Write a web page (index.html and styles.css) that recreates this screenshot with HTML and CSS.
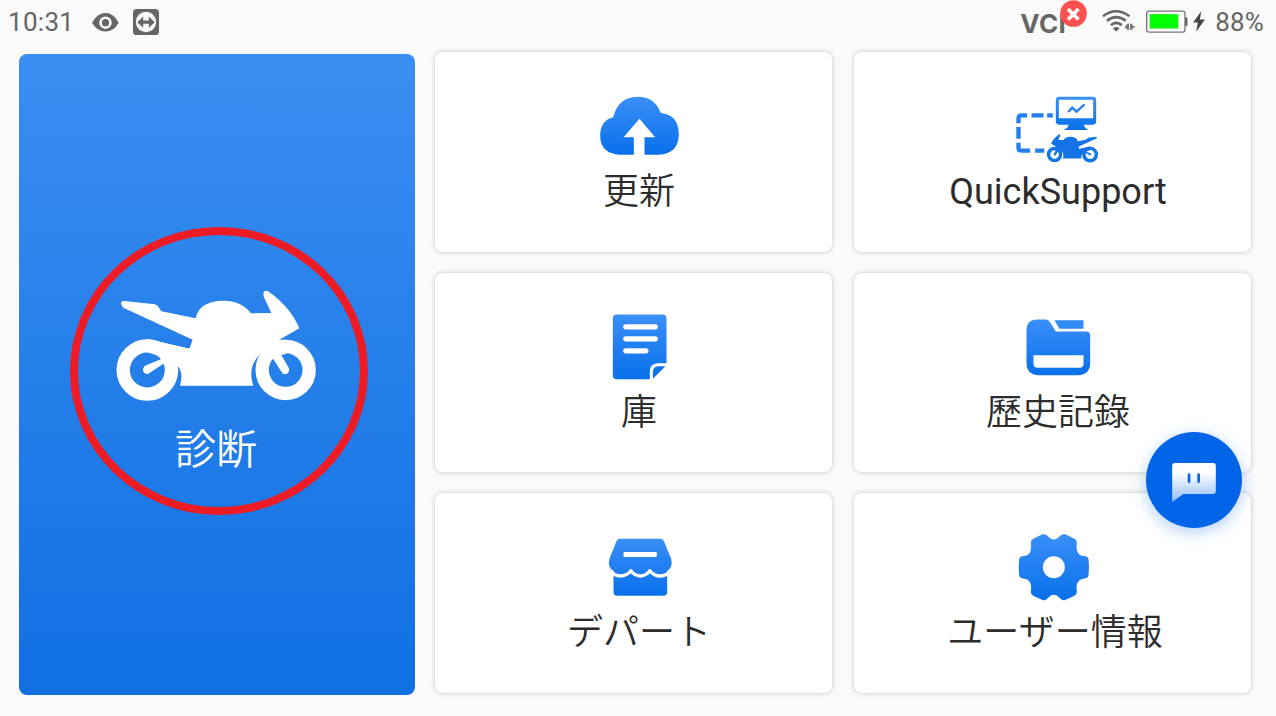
FILE: index.html
```
<!DOCTYPE html>
<html lang="ja">
<head>
    <title>診断</title>
    <meta charset="utf-8">
    <link rel="stylesheet" href="styles.css">
</head>
<body>

    <!-- Status bar -->
    <header class="status-bar">
        <span class="time">10:31</span>
        <svg class="eye" viewBox="276 36 82 57">
            <path d="M276 65 Q292 36 317 36 Q342 36 357 65 Q342 92 317 92 Q292 92 276 65Z" fill="#666"/>
            <circle cx="317" cy="65" r="15" fill="none" stroke="#fafafa" stroke-width="8"/>
            <circle cx="317" cy="65" r="7" fill="#666"/>
        </svg>
        <svg class="remote" viewBox="399 25 79 79">
            <rect x="399" y="25" width="79" height="79" rx="11" fill="#666"/>
            <circle cx="438.500" cy="64.500" r="31" fill="#fafafa"/>
            <path d="M412 65 L430 48 V60 H447 V48 L465 65 L447 82 V70 H430 V82Z" fill="#666"/>
        </svg>

        <div class="vci">VCI
            <svg class="vci-badge" viewBox="0 0 27 27">
                <circle cx="13.500" cy="13.500" r="13.300" fill="#fc5050"/>
                <path d="M8 9 L18.500 19.500 M18.500 9 L8 19.500" stroke="#fff" stroke-width="3.600"/>
            </svg>
        </div>
        <svg class="wifi" viewBox="305 25 100 68">
            <g fill="none" stroke="#666" stroke-width="8">
                <path d="M308 46 Q348 16 388 46"/>
                <path d="M320 60 Q348 37 377 60"/>
                <path d="M332 73 Q348 59 365 73"/>
            </g>
            <path d="M338 83 Q348 75 358 83 L348 92Z" fill="#666"/>
            <path d="M375 75 H379 V71 Q380 68 387 68 V88 Q380 88 379 83 H375Z M390 68 Q397 68 398 73 V76 H404 V81 H398 V84 Q397 88 390 88Z" fill="#777"/>
        </svg>
        <svg class="battery" viewBox="438 29 126 68">
            <rect x="440" y="32" width="115" height="63" rx="7" fill="#fff" stroke="#777" stroke-width="4"/>
            <rect x="449" y="41" width="86" height="43" fill="#0f0"/>
            <path d="M556 51 H562 V76 H556Z" fill="#555"/>
        </svg>
        <svg class="bolt" viewBox="580 34 35 62">
            <path d="M604 35 L580 68 H594 L589 95 L615 59 H600Z" fill="#444"/>
        </svg>
        <span class="percent">88%</span>
    </header>

    <main class="home">
        <section class="diagnosis">
            <svg class="bike" viewBox="168 210 600 336">
                <g id="bike" fill="currentColor">
                    <path d="M183 248 Q184 242 194 243 L284 253 Q292 254 296 262 L304 274 L407 295 Q417 243 490 242 Q545 242 573 280 L634 279 L611 230 Q608 212 617 212 Q624 212 640 225 Q680 258 700 290 Q712 309 718 325 L658 359 L640 374 Q574 410 574 460 Q574 483 580 497 H360 Q371 462 354 438 L300 410 L262 357 L388 386 L398 359 L190 263 Q183 256 183 248Z"/>
                    <path d="M262 357 L388 386 V440 H351 L318 426 L264 462 Q250 462 249 449 Q250 438 260 435 L314 413 L262 397Z"/>
                    <path d="M636 411 L662 402 L687 445 Q689 460 677 463 Q668 463 663 454Z"/>
                    <path d="M628 373 L658 359 L677 359 V402 L626 414 L595 410Z"/>
                </g>
                <g id="wheels" fill="none" stroke="currentColor" stroke-width="40">
                    <circle cx="262" cy="450" r="72.500"/>
                    <circle cx="677" cy="450" r="70.500"/>
                </g>
            </svg>
            <span class="diagnosis-label">診断</span>
            <div class="highlight"></div>
        </section>

        <section class="cards">
            <div class="card">
                <svg class="icon" viewBox="43.5 42 270 210">
                    <defs>
                        <linearGradient id="blue" x1="0" y1="0" x2="0" y2="1">
                            <stop offset="0" stop-color="#3b8ff8"/>
                            <stop offset="1" stop-color="#0870ea"/>
                        </linearGradient>
                    </defs>
                    <path fill="url(#blue)" d="M122 224 Q62 222 62 166 Q63 121 101 112 Q116 51 174 50 Q226 50 244 99 Q297 104 298 162 Q297 222 238 224 H195 V172 H227 L180 116 L132 172 H163 V224Z"/>
                </svg>
                <span class="label">更新</span>
            </div>
            <div class="card">
                <svg class="icon" viewBox="220.5 42 270 210">
                    <path d="M237 130 V115 Q237 106 247 106 H263 M276 106 H312 M323 106 H340 M237 141 V176 M237 188 V203 Q237 212 247 212 H272 M287 212 H314" fill="none" stroke="#247fed" stroke-width="13"/>
                    <path fill="url(#blue)" fill-rule="evenodd" d="M359 50 H460 Q470 50 470 60 V124 Q470 134 460 134 H432 Q436 144 446 150 H373 Q385 144 388 134 H359 Q349 134 349 124 V60 Q349 50 359 50Z M358 59 V115 H461 V59Z"/>
                    <path d="M386 96 L398 83 L411 95 L435 73" fill="none" stroke="#247fed" stroke-width="7"/>
                    <g class="mini-bike" transform="translate(519.200 108) scale(-.257 .257)">
                        <use href="#bike"/>
                        <use href="#wheels"/>
                    </g>
                </svg>
                <span class="label latin">QuickSupport</span>
            </div>
            <div class="card">
                <svg class="icon" viewBox="13.5 43.5 270 210">
                    <path fill="url(#blue)" d="M82 42 H219 Q231 42 231 54 V188 H204 Q181 189 181 212 V236 H82 Q70 236 70 224 V54 Q70 42 82 42Z"/>
                    <path fill="#1175ed" d="M228 197 L191 234 Q190 232 190 225 V213 Q191 198 206 197Z"/>
                    <path d="M109 79 H197 M109 115 H197 M109 151 H169" stroke="#fff" stroke-width="16" stroke-linecap="round"/>
                </svg>
                <span class="label">庫</span>
            </div>
            <div class="card">
                <svg class="icon" viewBox="130.5 28.5 270 210">
                    <path fill="url(#blue)" fill-rule="evenodd" d="M204 42 H229 Q236 42 240 48 L259 78 H350 Q362 78 362 90 V172 Q362 209 325 209 H208 Q171 209 171 172 V75 Q171 42 204 42Z M192 149 V176 Q193 186 203 187 H331 Q341 186 342 176 V149Z"/>
                    <path fill="#318af6" d="M255 44 H342 V70 H270Z"/>
                </svg>
                <span class="label">歷史記錄</span>
            </div>
            <div class="card">
                <svg class="icon" viewBox="103.5 30 270 210">
                    <path fill="url(#blue)" d="M181 41 H303 Q310 41 313 48 L335 101 Q341 126 323 139 V201 Q323 212 312 212 H173 Q162 212 162 201 V139 Q143 126 150 101 L171 48 Q174 41 181 41Z"/>
                    <path d="M155 136 Q162 153 184 153 Q204 152 214 137 Q224 152 243 153 Q261 152 271 137 Q282 152 301 153 Q324 153 332 136" fill="none" stroke="#fff" stroke-width="10" stroke-linejoin="round"/>
                    <path d="M158 138 L163 150 L150 151Z M327 138 L323 150 L336 151Z" fill="#fff"/>
                    <rect x="192" y="81" width="100" height="15" rx="3" fill="#fff"/>
                </svg>
                <span class="label">デパート</span>
            </div>
            <div class="card">
                <svg class="icon" viewBox="220.5 30 270 210">
                    <path fill="url(#blue)" fill-rule="evenodd" d="M309 28 Q316 26 322 31 L332 40 Q343 47 354 40 L364 31 Q370 26 377 28 L405 41 Q412 45 412 52 L411 68 Q413 88 427 92 L438 94 Q445 95 447 102 Q450 127 447 152 Q445 159 438 160 L427 162 Q413 167 411 184 L412 202 Q412 208 405 212 L377 225 Q370 227 364 222 L354 213 Q343 206 332 213 L322 222 Q316 227 309 225 L281 212 Q274 208 274 202 L275 184 Q273 167 259 162 L248 160 Q241 159 239 152 Q236 127 239 102 Q241 95 248 94 L259 92 Q273 88 275 68 L274 52 Q274 45 281 41Z M310 127 A33 33 0 1 0 376 127 A33 33 0 1 0 310 127Z"/>
                </svg>
                <span class="label user-label">ユーザー情報</span>
            </div>
        </section>
    </main>

    <!-- Floating chat button -->
    <button class="chat">
        <svg viewBox="126 128 132 118">
            <defs>
                <linearGradient id="bubble" x1="0" y1="0" x2="0" y2="1">
                    <stop offset=".25" stop-color="#fff"/>
                    <stop offset="1" stop-color="#8fbcf6"/>
                </linearGradient>
            </defs>
            <path fill="url(#bubble)" d="M134 128 H250 Q258 128 258 137 V213 Q258 222 249 222 H160 L126 246 V137 Q126 128 134 128Z"/>
            <path d="M177 163 V185 M206 163 V185" stroke="#0a63df" stroke-width="8" stroke-linecap="round"/>
        </svg>
    </button>

</body>
</html>
```
FILE: styles.css
```
* {
    box-sizing: border-box;
}
body {
    margin: 0;
    width: 1276px;
    height: 716px;
    overflow: hidden;
    background: #fafafa;
    font-family: Roboto, "Noto Sans CJK JP", sans-serif;
    color: #2c2c2c;
}
svg {
    display: block;
    flex: none;
    overflow: visible;
}

/* Status bar */
.status-bar {
    display: flex;
    align-items: center;
    height: 44px;
    padding: 0 12px 0 8px;
    font-size: 26px;
    color: #666;
}
.time {
    width: 84px;
    letter-spacing: 0.3px;
}
.eye {
    width: 27px;
    height: 19px;
}
.remote {
    width: 26px;
    height: 26px;
    margin-left: 14px;
}
.vci {
    position: relative;
    margin-left: auto;
    margin-right: 36px;
    padding-top: 3px;
    font-family: Inter, sans-serif;
    font-size: 26px;
    font-weight: 700;
    letter-spacing: 0.3px;
}
.vci-badge {
    position: absolute;
    top: -5px;
    right: -21px;
    width: 27px;
    height: 27px;
}
.wifi {
    width: 33px;
    height: 23px;
    margin-right: 11px;
    margin-bottom: 4px;
}
.battery {
    width: 42px;
    height: 23px;
    margin-right: 5px;
    margin-bottom: 2px;
}
.bolt {
    width: 12px;
    height: 21px;
    margin-right: 10px;
    margin-bottom: 1px;
}
.percent {
    letter-spacing: 0.2px;
}

/* Home screen */
.home {
    display: flex;
    gap: 20px;
    padding: 8px 24px 0 19px;
}
.diagnosis {
    position: relative;
    display: flex;
    flex-direction: column;
    align-items: center;
    width: 396px;
    height: 641px;
    margin-top: 2px;
    padding: 236px 2px 0 0;
    border-radius: 8px;
    background: linear-gradient(#3a8ef1, #1070e2);
    color: #fff;
}
.bike {
    width: 200px;
    height: 112px;
}
.diagnosis-label {
    margin-top: 20px;
    font-size: 41px;
    font-weight: 350;
    line-height: 56px;
}
.highlight {
    position: absolute;
    top: 173px;
    left: 51px;
    width: 298px;
    height: 288px;
    border: 8px solid #ed1c24;
    border-radius: 50%;
}
.cards {
    display: grid;
    grid-template-columns: 397px 397px;
    grid-auto-rows: 199.5px;
    gap: 21px 22px;
}
.card {
    display: flex;
    flex-direction: column;
    align-items: center;
    padding: 42px 0 0 11px;
    border-radius: 8px;
    background: #fff;
    box-shadow: 0 0 5px rgba(0, 0, 0, 0.22);
}
.icon {
    width: 90px;
    height: 70px;
}
.mini-bike {
    color: #1473e6;
}
.label {
    margin-top: 1px;
    font-size: 36px;
    font-weight: 350;
    line-height: 54px;
    white-space: nowrap;
}
.latin {
    font-weight: 400;
}
.user-label {
    margin-right: 6px;
}

/* Chat button */
.chat {
    position: absolute;
    top: 432px;
    left: 1146px;
    display: flex;
    align-items: center;
    justify-content: center;
    width: 96px;
    height: 96px;
    padding: 4px 0 0;
    border: none;
    border-radius: 50%;
    background: #0264e6;
    box-shadow: 0 4px 16px rgba(2, 100, 230, 0.3);
}
.chat svg {
    width: 44px;
    height: 39px;
}
```
